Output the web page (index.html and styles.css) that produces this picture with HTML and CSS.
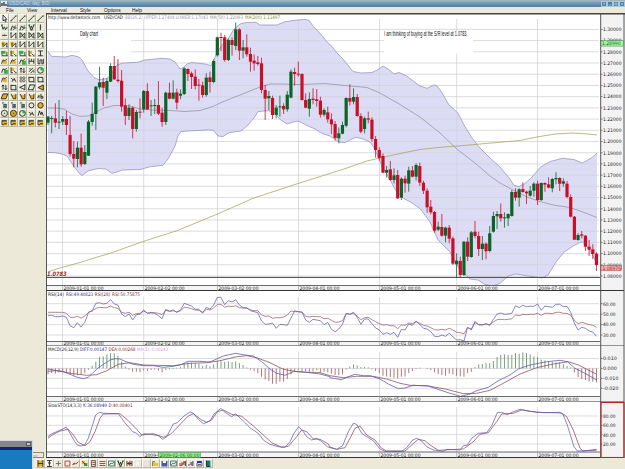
FILE: index.html
```
<!DOCTYPE html>
<html lang="en">
<head>
<meta charset="utf-8">
<title>USD/CAD, day, BID</title>
<link rel="stylesheet" href="styles.css">
</head>
<body>
<header class="titlebar">
  <svg class="app-icon" viewBox="0 0 6 6"><rect width="6" height="6" fill="#e8e8e0"/><path d="M1 5V2M3 5V1M5 5V3" stroke="#222" stroke-width="1.2"/></svg>
  <span class="title">USD/CAD, day, BID</span>
  <div class="window-buttons">
    <svg viewBox="0 0 6 6"><path d="M3 5V1M1.5 2.5L3 1L4.500 2.500"/></svg>
    <svg viewBox="0 0 6 6"><path d="M1 4.500H5"/></svg>
    <svg viewBox="0 0 6 6"><rect x="1.500" y="1.500" width="3" height="3"/></svg>
    <svg viewBox="0 0 6 6"><path d="M1 1L5 5M5 1L1 5"/></svg>
  </div>
</header>
<nav class="menu"><span>File</span><span>View</span><span>Interval</span><span>Style</span><span>Options</span><span>Help</span></nav>
<main class="workspace">
  <aside class="side">
    <div class="tools" id="tools"></div>
    <div class="side-tab">rpt:</div>
  </aside>
  <section class="charts">
    <svg class="chart price" id="price" viewBox="46 13 579 278"></svg>
    <svg class="chart rsi" id="rsi" viewBox="46 291 579 55"></svg>
    <svg class="chart macd" id="macd" viewBox="46 346 579 56"></svg>
    <svg class="chart sto" id="sto" viewBox="46 402 579 56"></svg>
  </section>
</main>
<footer class="bottombar" id="bottombar"></footer>
<div class="popup"><div class="popup-title"><span></span></div><div class="popup-edge"></div></div>
<script src="chart.js"></script>
</body>
</html>
```
FILE: styles.css
```
* { box-sizing: border-box; }
body {
  margin: 0;
  width: 625px;
  height: 469px;
  overflow: hidden;
  display: flex;
  flex-direction: column;
  background: #ece9d8;
  font-family: "Liberation Sans", sans-serif;
}
.titlebar {
  height: 7px;
  display: flex;
  align-items: center;
  background: linear-gradient(#a9b9c6, #7398b4 45%, #4a7ea8);
}
.app-icon { width: 6px; height: 6px; margin-left: 1px; }
.title { margin-left: 2px; font-size: 4.6px; line-height: 7px; color: #c6d9e8; white-space: nowrap; }
.window-buttons { margin-left: auto; display: flex; }
.window-buttons svg { width: 6px; height: 6px; background: #4a7fa6; border: 0.5px solid #a8c8dc; fill: none; stroke: #d4e4ee; stroke-width: 0.8; }
.menu {
  height: 6px;
  padding-left: 6px;
  display: grid;
  grid-template-columns: 21px 24px 29px 24px 28px 20px;
  font-size: 4.8px;
  line-height: 7px;
  color: #111;
}
.workspace { height: 445px; display: flex; }
.side { width: 46px; display: flex; flex-direction: column; justify-content: space-between; }
.tools {
  display: grid;
  grid-template-columns: repeat(5, 8.9px);
  grid-auto-rows: 8.68px;
  width: 45px;
  padding-top: 1px;
  background: #e3dfce;
}
.tool { width: 8.9px; height: 8.68px; fill: none; stroke: #222; stroke-width: 0.9; }
.side-tab { width: 12px; height: 6px; margin-left: 32px; border: 0.5px solid #8b887b; font-size: 4px; line-height: 5px; color: #a19e90; }
.charts { width: 579px; display: flex; flex-direction: column; background: #fff; }
.chart { display: block; width: 579px; }
.price { height: 278px; }
.rsi { height: 55px; }
.macd { height: 56px; }
.sto { height: 56px; }
.chart text { font-family: "DejaVu Sans", sans-serif; font-size: 4.8px; fill: #222; }
.chart .note { font-family: "Liberation Sans", sans-serif; font-size: 6.4px; fill: #111; }
.chart .level { font-family: "DejaVu Sans", sans-serif; font-size: 6px; font-weight: bold; font-style: italic; fill: #a51c1c; }
.grid { stroke: #cdcdd0; stroke-width: 0.7; fill: none; }
.line { fill: none; stroke-width: 0.75; stroke-linejoin: round; }
.bottombar { height: 11px; padding: 1px 0 0 36px; display: flex; }
.bottombar .tool { width: 8.87px; height: 9px; }
.popup { position: absolute; left: 0; top: 440px; width: 33px; height: 29px; background: #1a7abf; border-right: 1.5px solid #d8dadf; border-top: 1px solid #d8dadf; }
.popup-title { height: 6px; background: #85878a; display: flex; justify-content: flex-end; padding: 1px; }
.popup-title span { width: 5px; height: 4px; background: #c9cbd0; border: 0.5px solid #555; }
.popup-edge { height: 3px; background: #17207c; }
```
FILE: chart.js
```
const X0 = 48, STEP = 3.681;
const xAt = i => X0 + STEP * i;
const months = [[62.5, '2009-01-01 00:00'], [143.7, '2009-02-02 00:00'], [217.5, '2009-03-02 00:00'], [298.5, '2009-04-01 00:00'], [379.5, '2009-05-01 00:00'], [456.7, '2009-06-01 00:00'], [537.5, '2009-07-01 00:00']];

const text = (x, y, s, w, fill, cls) =>
  `<text x="${x}" y="${y}"${w ? ` textLength="${w}" lengthAdjust="spacingAndGlyphs"` : ''}${fill ? ` style="fill:${fill}"` : ''}${cls ? ` class="${cls}"` : ''}>${s}</text>`;
const hline = (y, c = '#333', w = 1, x2 = 600) => `<path d="M46 ${y}H${x2}" stroke="${c}" stroke-width="${w}"/>`;
const poly = (pts, c) => `<polyline class="line" stroke="${c}" points="${pts}"/>`;
const rect = (x, y, w, h, f, s) => `<rect x="${x}" y="${y}" width="${w}" height="${h}" fill="${f}"${s ? ` stroke="${s}" stroke-width=".5"` : ''}/>`;
// Converts triple-resolution points to drawing units
const scaled = (s, ox, oy) => s.split(' ').map(p => { const [a, b] = p.split(','); return (ox + a / 3).toFixed(1) + ',' + (oy + b / 3).toFixed(1); }).join(' ');

function frame(top, bottom, dateTop, gridTop, levels) {
  let s = rect(46, top, 555, bottom - top, '#fff') + rect(601, top, 24, bottom - top, '#f3f3f3');
  levels.forEach(([y]) => s += `<path class="grid" d="M47 ${y}H599"/>`);
  months.forEach(([x]) => s += `<path class="grid" d="M${x} ${gridTop}V${dateTop}"/>`);
  return s;
}
function finish(top, bottom, dateTop, levels, w) {
  let s = rect(47, dateTop, 553, bottom - dateTop, '#f4f4f4') + hline(dateTop, '#444', 0.8) + hline(bottom - 0.5, '#333', 1, 624);
  months.forEach(([x, t]) => s += `<path d="M${x} ${dateTop}V${bottom}" stroke="#888" stroke-width=".5"/>` + text(x + 1, bottom - 1.3, t, 40));
  s += `<path d="M46.5 ${top}V${bottom}M600.7 ${top}V${bottom}M624 ${top}V${bottom}" stroke="#444" stroke-width=".9"/>`;
  levels.forEach(([y, t]) => s += `<path d="M601 ${y}h1.500" stroke="#444" stroke-width=".7"/>` + text(603, y + 1.8, t, w));
  return s;
}

/* ---- price ---- */
const candles = [
[10, 'g318,320,338,345 g318,324,327,370 r280,325,338,352 g270,335,338,357 g318,327,335,345 r303,327,345,375 r318,375,432,440 r393,432,446,472 g395,413,447,472 r371,413,463,470 g405,426,462,465 g330,335,437,438 g278,312,336,347 g228,230,312,360 g170,217,232,238 r203,216,233,288 g205,213,248,267 g160,168,215,216 r138,168,208,210 r147,209,213,218 r180,212,290,305 r265,286,318,345 g283,293,318,330 r290,293,357,385 g300,306,357,365 r265,305,308,325 g240,243,298,308 r220,243,298,300 g270,286,289,318 g267,285,288,312 r213,285,311,315 r293,308,336,350 g245,248,336,345 r218,248,266,268 g211,248,266,268 r236,247,278,298 g238,251,257,268 g172,175,252,255 r175,177,192,213 r185,190,201,237 r178,200,228,238 r207,224,227,272 r215,226,255,263 g190,203,255,260 r185,202,216,248 g148,153,216,220 g80,82,136,140 r68,81,84,123 r75,82,150,155 g85,90,150,153 r82,90,105,137 g37,58,108,120 r55,58,122,150 g90,112,122,145 r73,112,133,140 r113,132,155,185 r133,152,160,182 r138,157,162,167 r143,160,240,250 r225,240,266,330 g243,258,265,300 r257,264,315,327 g285,293,315,325 g257,289,292,320 r280,288,298,312 g243,254,298,305 g178,185,263,265 r173,186,192,227 r155,191,193,200 r190,192,270,272 r250,270,293,295 g247,267,296,320 r235,266,270,283 r237,268,273,290 r260,272,314,323 g295,300,314,320 r290,307,328,338 r310,328,343,372 r333,342,384,392 g353,370,385,400 g335,345,371,373 g262,264,347,352 r223,264,275,287 g235,261,275,283 r252,261,318,320 r310,318,365,370 g320,325,357,370 r305,325,329,340 r322,329,387,395'],
[60, 'r228,237,270,293 r262,270,294,302 r280,288,338,340 g318,330,338,353 r303,328,360,362 g325,346,360,370 r330,345,415,417 g352,356,413,420 r347,356,370,398 g320,331,371,395 r318,331,350,352 g310,315,350,362 r308,318,368,378'],
[150, 'r92,98,122,132 r115,122,172,188 r150,170,187,193 r183,186,242,248 g215,230,239,243 r192,231,257,260 g230,233,257,277 r225,233,266,280 r260,265,341,345 g310,332,343,384 r320,333,375,382 g273,275,375,378 r262,275,320,333 g243,247,321,323 r213,245,258,265 r245,258,297,318 g258,281,297,330 r277,281,304,328 g228,250,303,307 g185,198,245,248 g183,192,199,237 r160,192,205,215 g187,202,205,233 g190,192,205,228 g120,126,198,200 r115,126,143,152 g115,118,143,170 r97,117,126,128 r122,125,130,162 g108,122,137,140 g97,101,122,140 r92,101,150,165 g98,99,150,153 r97,99,104,125 r82,103,113,115 g84,87,115,127 g67,84,88,103 r82,84,101,123 g85,94,101,110 r93,101,141,145 r133,141,200,203 r198,200,269,270 g250,255,270,272 r243,253,257,265 r255,257,290,303 r270,290,299,318 r283,298,312,327 r307,311,345,363']];
const upper = '48,51.5 51.5,56.3 66,57 72,55.3 79,57 82,60 88,71 94,77.5 99,79.8 107,78.5 112,73 117,65 123,63 138,62.3 145,60 162,58.3 170,59 175,62 180,69 184,67 187,64 192,62.5 205,64 211,65.5 214,60 217,52 223,44 228,39 234,29 240,24 246,22.5 256,22.3 260,25 277,25 284,22 292,20.7 304,19.3 309,20.3 313,26 322,35.5 327,42 332,46.5 337,53 343,59 353,71.5 361,73 372,72.5 378,69.5 383,66 388,69 394,74 399,72.5 406,75.5 414,81.5 420,86 427,88.3 434,85 437,86 441,91 449,105 458,113 464,125 472,138 480,148 490,158 500,167 510,179 514,185.5 519,186.5 525,183.5 532,177 540,167.5 550,161.5 558,159.5 562,158.3 574,159.5 582,163 586,161 592,157.5 597,153';
const lower = '48,152.5 54,152.5 61,153.8 67,156 73,165 79,173 82,175.5 88,171 98,168.5 106,169 112,173.3 117,172 122,170 140,169.5 150,166.8 163,165.3 168,159 175,146 178,136 181,131.5 192,130.8 206,130 213,130 218,136 223,136.6 229,132.5 241,131 248,125 254,118 258,111.5 268,110.8 274,112 280,119.5 287,124 295,121.5 299,121.3 306,125 315,129 322,133.5 330,136 339,142 345,142.7 350,140 356,137.3 363,139 370,142 373,146 377,154 382,166 389,178 396,191 403,198 412,203 420,208.500 430,222 438,240 450,252 460,270 470,279 478,280 484,284 492,286 500,283.5 508,276 516,274 528,276 542,278 548,275 556,262 564,252 574,245.5 582,241.5 590,250 597,264';
const ma50 = '48,108 56,108 64,109 72,114 80,116.3 88,116 96,112 104,108 114,105.5 121,105.5 130,106 140,109 152,110 170,110.5 185,111.5 200,110.5 213,106.5 220,103 240,95 260,87 270,84 283,84 300,84.5 325,83.5 345,85.5 367,87.5 380,93 400,104.5 420,117 440,133 458,150 475,163 490,176 500,183 515,191 527,197 540,201.5 553,205 570,207.5 580,211 588,214 597,217.5';
const ma200 = '48,272 58,268.500 80,262.500 94,258 110,253.3 143,241.5 177,230.7 217.5,214 253,198.3 298,183.5 345,168.7 367,161 380,158 400,153.500 420,149.5 440,147.300 458,146 480,144 505,141.800 520,140.5 537,137 555,134 572,133 585,133.7 597,135';

const priceLevels = [];
for (let k = 0; k < 23; k++) priceLevels.push([29.4 + k * 11.21, (1.3 - k * 0.01).toFixed(5)]);
let out = frame(13, 291, 285.5, 19, priceLevels);
// Note backgrounds hide the grid behind them
out += rect(80, 31, 51, 22.5, '#fff') + rect(384, 31, 89, 22.5, '#fff');
out += `<polygon fill="#dddcf5" points="${upper} ${lower.split(' ').reverse().join(' ')}"/>`;
out += `<clipPath id="band"><polygon points="${upper} ${lower.split(' ').reverse().join(' ')}"/></clipPath><g opacity=".75" clip-path="url(#band)">`;
priceLevels.forEach(([y]) => out += `<path class="grid" d="M47 ${y}H599"/>`);
months.forEach(([x]) => out += `<path class="grid" d="M${x} 19V285"/>`);
out += '</g>' + poly(upper, '#9493c4') + poly(lower, '#9493c4') + poly(ma50, '#9292a4') + poly(ma200, '#a3a35a');
let idx = 0;
candles.forEach(([oy, list]) => list.split(' ').forEach(c => {
  const color = c[0] === 'g' ? '#0b6427' : '#c80f28';
  const [h, t, b, l] = c.slice(1).split(',').map(v => oy + v / 3);
  const x = xAt(idx++);
  out += `<path d="M${x} ${h}V${l}" stroke="${color}" stroke-width=".8"/>` + rect((x - 1.6).toFixed(2), t.toFixed(2), 3.2, Math.max(1, b - t).toFixed(2), color);
}));
out += hline(277.4, '#444', 1);
out += text(80, 36.3, 'Daily chart', 18, '', 'note') + text(384, 36.3, 'I am thinking of buying at the S/R level at 1.0783.', 83.5, '', 'note');
out += text(47, 276, '1.0783', 19.5, '', 'level');
out += text(48, 18.6, 'http://www.deltastock.com', 52) + text(104, 18.6, 'USD/CAD', 19) + text(125, 18.6, 'BB(26,2) UPPER:1.27404 LOWER:1.17043', 83, '#9a99bb') + text(210, 18.6, 'MA(50) 1.22093', 33, '#8f8f9c') + text(245, 18.6, 'MA(200) 1.11497', 35, '#8a8a30');
out += finish(13, 291, 285.5, priceLevels, 18.5) + hline(13.8, '#444', 1.4, 625);
out += rect(601, 40.7, 22.5, 5.4, '#a6f3a2', '#3a7a3a') + text(602, 45.1, '1.28990', 18.5, '#245c24');
out += rect(601, 265.3, 20.5, 5.2, '#f4b6b6', '#a33') + text(602.5, 269.7, '1.08976', 18.5, '#822');
document.getElementById('price').innerHTML = out;

/* ---- RSI ---- */
const series = parts => { let i = 0, p = []; parts.forEach(([oy, s]) => s.split(' ').forEach(v => p.push(xAt(i++).toFixed(1) + ',' + (oy + v / 3).toFixed(1)))); return p.join(' '); };
const rsiFast = series([
[250, '196 196 200 200 198 202 227 233 218 231 217 187 182 160 158 162 160 149 162 165 192 200 192 210 194 193 180 190 188 190 197 206 178 184 180 187 180 160 164 168 178 178 190 172 177 165 142 142 164 152 156 149 165'],
[160, '443 443 452 455 458 483 493 492 489 505 493 494 496 475 452 455 456 480 487 478 480 482 494 487'],
[280, '148 155 147 133 100 103 97 112 133 117 117 131 144 150 163 158 163 157 172 148 150 132 136 124 133 145 147 155 169 170 165 169 160 170 180 179 183 142 150 124 135 135 131 136 118 102 99 103 102 100 77 83 76 80 79 79 72 91 78 80 82 73 73 80 79 97 130 150 142 145 153 156 169']]);
const rsiSlow = series([
[250, '187 187 187 187 187 190 202 202 199 204 198 187 183 175 172 173 173 168 173 175 187 190 187 196 191 190 183 189 188 188 190 194 181 184 182 186 182 172 173 176 180 181 187 178 180 174 163 163 172 168 170 167 173'],
[160, '444 445 450 452 452 465 469 468 475 473 473 471 465 453 455 455 457 469 471 469 470 470 476 475'],
[280, '121 127 126 122 101 103 100 108 119 113 112 119 125 131 135 134 137 137 146 135 136 129 131 125 130 136 138 143 149 150 148 150 145 150 157 158 161 143 147 128 133 134 132 134 126 119 118 119 118 116 105 107 103 104 103 103 100 106 100 100 101 97 97 100 100 106 121 131 127 130 134 136 142']]);
const rsiLevels = [[303.7, '60.00'], [314.2, '50.00'], [324.6, '40.00'], [335, '30.00']];
document.getElementById('rsi').innerHTML = frame(291, 346.5, 341.5, 297, rsiLevels) + poly(rsiSlow, '#96606a') + poly(rsiFast, '#5f5fae')
  + text(48, 295.9, 'RSI(14)', 16) + text(66, 295.9, 'RSI:49.40823', 27, '#2c2c8c') + text(94.5, 295.9, 'RSI(28)', 16, '#7c2c2c') + text(112, 295.9, 'RSI:50.75875', 28, '#7c2c2c') + finish(291, 346.5, 341.5, rsiLevels, 12.5);

/* ---- MACD ---- */
const diff = scaled('24,94 46,92 68,94 90,103 112,112 130,116 145,112 160,97 175,83 195,70 210,60 225,56 240,57 255,64 280,73 311,77 340,77 370,82 400,79 420,75 445,64 480,64 510,66 530,57 550,48 587,40 610,44 640,48 665,65 690,87 710,100 735,106 760,95 776,94 800,97 840,102 870,110', 40, 340) + ' ' + scaled('0,293 35,299 50,292 75,283 100,287 120,287 150,297 175,312 205,326 225,324 250,316 295,318 330,330 360,340 392,349 420,342 440,332 475,322 505,302 540,285 565,267 600,255 650,245 690,241 712,245 735,265 765,280 800,300', 330, 280);
const dea = scaled('24,87 60,94 100,101 140,106 170,104 200,92 235,73 270,68 311,75 400,77 450,70 500,68 540,62 590,50 620,47 650,53 690,68 730,88 776,96 840,98', 40, 340) + ' ' + scaled('0,287 40,293 80,289 130,289 170,297 210,310 240,316 290,317 350,328 400,341 440,340 480,331 520,310 570,282 620,263 670,252 715,245 745,255 775,270 800,283', 330, 280);
const hist = [-18,-14,-16,-12,-10,-14,-18,-20,-20,-18,-14,-4,8,20,35,36,42,46,45,38,20,5,-4,-10,-10,-11,-6,-8,-5,-4,-7,-12,-5,-3,-2,2,4,14,18,17,15,14,7,10,6,12,22,24,20,21,19,21,16,10,3,-4,-8,-14,-25,-33,-38,-46,-46,-40,-40,-32,-18,-8,-4,-8,-8,-10,-9,-6,-12,-10,-12,-16,-20,-20,-18,-4,6,12,9,4,4,3,-3,-8,-14,-22,-24,-26,-28,-30,-25,-24,-14,-8,-2,2,0,-2,-5,-12,-17,-20,-22,-16,-18,-22,-24,-25,-14,-10,4,12,13,16,16,22,34,40,42,40,40,46,44,48,46,42,36,34,26,24,22,20,18,18,13,8,3,-12,-26,-32,-35,-40,-40,-42];
const macdLevels = [[358.5, '0.010'], [368.4, '0.000'], [378.4, '-0.010'], [388.3, '-0.020']];
let m = frame(346, 402.5, 396.5, 352, macdLevels);
hist.forEach((v, i) => m += `<path d="M${xAt(i)} 368.400v${-v / 3}" stroke="${v > 0 ? '#66976a' : '#a8686e'}" stroke-width=".9"/>`);
m += poly(dea, '#854a55') + poly(diff, '#5555ad') + text(48, 351.2, 'MACD(26,12,9)', 30.5) + text(80, 351.2, 'DIFF:0.00147', 27, '#2c2c8c') + text(108.5, 351.2, 'DEA:0.00268', 27, '#7c2c2c') + text(137, 351.2, 'MACD:-0.00243', 31, '#d59bd5');
document.getElementById('macd').innerHTML = m + finish(346, 402.5, 396.5, macdLevels, 0);

/* ---- slow stochastic ---- */
const k = scaled('24,290 35,281 46,277 57,272 68,267 79,261 90,280 101,300 112,315 123,318 134,315 145,295 156,260 167,225 178,217 190,220 235,221 245,235 256,250 267,262 278,275 290,280 300,290 311,281 333,283 355,287 368,298 380,290 400,252 412,248 432,228 450,216 460,220 475,238 490,251 510,243 522,222 543,205 552,215 575,230 587,221 600,234 615,248 632,265 655,280 670,300 690,313 715,320 735,322 750,305 762,280 776,260 790,275 800,290 815,300 830,295 845,305 862,320', 40, 340) + ' ' + scaled('0,503 20,508 38,497 55,455 70,430 80,433 95,460 110,470 130,482 150,507 165,514 215,514 230,503 248,480 260,475 275,483 290,500 310,510 340,514 350,508 390,510 400,497 412,495 425,475 445,460 470,458 485,437 502,398 515,397 532,404 550,395 570,388 600,394 640,398 690,397 700,405 712,435 732,500 742,513 800,511', 330, 280);
const d = scaled('24,295 40,283 60,273 85,268 100,285 115,307 135,317 150,305 165,275 180,235 190,222 240,221 265,242 290,268 305,285 340,281 370,292 390,284 410,264 430,243 445,228 460,221 485,240 500,247 515,240 532,215 550,210 575,223 605,229 640,258 670,285 695,308 725,322 745,319 770,290 785,270 800,275 820,297 840,298 865,312', 40, 340) + ' ' + scaled('0,501 20,508 45,503 60,475 75,445 90,438 110,465 135,480 155,505 170,513 225,513 245,495 265,478 285,482 300,495 325,511 400,507 430,485 450,463 475,458 500,425 515,402 550,400 575,390 620,397 695,399 710,410 730,450 750,505 760,513 800,508', 330, 280);
const stoLevels = [[416, '80.00'], [425.3, '60.00'], [434.7, '40.00'], [444, '20.00']];
document.getElementById('sto').innerHTML = frame(402, 458, 452, 407, stoLevels) + poly(d, '#854a55') + poly(k, '#5f5fae')
  + text(48, 407, 'SlowSTO(14,3,3)', 33.5) + text(83, 407, 'K:36.08949', 24, '#2c2c8c') + text(108.5, 407, 'D:40.08401', 24, '#7c2c2c')
  + finish(402, 458, 452, stoLevels, 12.5) + rect(158.5, 452.3, 42, 5.2, '#9af096', '#3a8a3a') + text(159.5, 456.7, '2009-02-06 00:00', 40, '#245c24')
  + '<rect x="601" y="402.500" width="23" height="55" fill="none" stroke="#b22a2a" stroke-width="1.1"/>';

/* ---- tool buttons ---- */
const Y = '#e8ae1c', G = '#22b83a', N = '#1d2f9a';
const p = (dd, c) => `<path d="${dd}"${c ? ` stroke="${c}"` : ''}/>`;
const f = (dd, c) => `<path d="${dd}" fill="${c}" stroke="none"/>`;
const dots = (...a) => a.map(([x, y]) => `<rect x="${x - .6}" y="${y - .6}" width="1.300" height="1.300" fill="#064" stroke="none"/>`).join('');
const I = {
  ptr: f('M3 1V7L4.500 6L5.500 8L6.300 7.500L5.300 5.500H7Z', '#fff') + p('M3 1V7L4.500 6L5.500 8L6.300 7.500L5.300 5.500H7Z'),
  ln: p('M2 7L7 2') + dots([2, 7], [7, 2]),
  zig: p('M1.500 2L3 6L4.500 4L5.500 7L7 5') + dots([2, 2], [3, 6], [7, 5]),
  arc: p('M2 7L3.500 3L5 5L7 2.500M4 7L7 5') + dots([2, 7], [7, 5]),
  w: p('M2 2L3.500 6L4.500 3L5.500 6L7 2M3 7H6') + dots([2, 2], [7, 2], [4.5, 7]),
  v: p('M4.500 1.500V7.500') + dots([4.5, 4.5]),
  h: p('M2 4.500H7') + dots([4.5, 4.5]),
  n: p('M2 7V2M2 7L7 2V7') + dots([2, 2], [7, 7]),
  x: p('M2 2V7L7 2V7M3 2L6 7') + dots([2, 2], [7, 7]),
  yx: f('M1.500 2H5V5H1.500Z', Y) + p('M3 3V7M3 7L7 3V7') + dots([7, 7]),
  gb: f('M1 2H5.500V5H1Z', G) + p('M2 7H8M2 5V7M7 3V7', '#333'),
  yb: f('M2 2H5V5H2Z', Y) + p('M2 1.500V7H4M5 5L7 7') + dots([7, 7]),
  i: p('M2 2H7M4.500 2V7M2 7H7'),
  ya: f('M3 4H7V7H3Z', Y) + p('M1.500 7L3 3L5 4L7 2'),
  ga: f('M4 4H8V8H4Z', G) + p('M1.500 7L3 3L5 4L7 2'),
  H: p('M2 1.500V7.500M2 4.500H7M7 2V7M4.500 2V4'),
  U: p('M2 1.500V7H4V3H6V7H7.500V2'),
  up: p('M3 7V2M1.800 3.500L3 2L4.200 3.500M6 2V7M4.800 5.500L6 7L7.200 5.500'),
  grid: '<g stroke-width=".6"><circle cx="3" cy="3" r="1.200"/><circle cx="6" cy="3" r="1.200"/><circle cx="3" cy="6" r="1.200"/><circle cx="6" cy="6" r="1.200"/></g>',
  sq: p('M2 2.500H7V7H2Z') + dots([2, 2.5], [7, 7]),
  ch: p('M2 6L6 2M3.500 7.500L7.500 3.500') + dots([3, 3], [7, 6]),
  tri: p('M7 2V7L2 4.500Z') + dots([7, 2], [2, 4.5]),
  ytri: f('M7.500 2V7.500L2 4.700Z', Y) + p('M7.500 2V7.500L2 4.700Z'),
  par: p('M3 2H8L6 7H1Z') + dots([3, 2], [6, 7]),
  ypar: f('M3 2H8L6 7H1Z', Y) + p('M3 2H8L6 7H1Z'),
  ybox: f('M3 3H7V7H3Z', Y) + p('M2 2L4 6M7 2V7H4'),
  ab: p('M1.500 6L3 3.500V6.500M5 2V6.500H7V4.500H5'),
  doc: f('M3 3H7V7.500H3Z', '#78909c') + p('M2 2H4M4 4H7M4 6H7', '#234'),
  hex: '<circle cx="4.500" cy="4.500" r="2.600"/>',
  yhex: `<circle cx="4.500" cy="4.500" r="2.800" fill="${Y}"/>`,
  tgt: '<circle cx="4.500" cy="4.500" r="3.200"/>' + dots([4.5, 4.5]),
  ytgt: `<circle cx="4.500" cy="4.500" r="3.200" fill="${Y}"/>` + dots([4.5, 4.5]),
  gp: '<circle cx="4.500" cy="4.500" r="3"/>' + f('M4.500 4.500V1A3.500 3.500 0 0 1 8 5Z', G),
  man: p('M2 3L4 5L3 7M5 3L7 7M4 5H6'),
  A: p('M2 7L3.500 2L5 6L6 3L7.500 7'),
  trash: f('M2 2H7V4H2Z', '#555') + f('M3 4H7.500V7.500H3Z', Y) + p('M2 2.500V7H4M4 6H7'),
  film: f('M2 1.500H7V7.500H2Z', Y) + p('M2 1V8M7 1V8M2 4.500H7'),
  cur: p('M2 1.500H7M2 7.500H7M4.500 1.500V7.500M3 4H6'),
  plus: p('M4.500 2V7M2 4.500H7', '#666'),
  rs: p('M2 2H7V7H2Z', '#a44'),
  rz: p('M1.500 6L3.500 4L5 5L7.500 2.500', '#922') + dots([3, 5]),
  mix: f('M2 2H5V5H2Z', Y) + f('M4 4H7.500V7H4Z', G) + p('M2 2L7 7', '#a22'),
  page: p('M2.500 1.500H6.500V7.500H2.500ZM3.500 3.500H6M3.500 5.500H6', '#644'),
  eq: p('M1.500 2.500H7.500M1.500 4.500H7.500M1.500 6.500H7.500', '#844'),
  img: p('M1.500 2H7.500V7H1.500ZM2 6L4 4L5 5L7 3', '#377'),
  bars: p('M2 2V7M4 3V6M5 2V7M7 2V7M2 4.500H7', '#522'),
  blank: p('M2 2H7V7H2Z', '#ddd'),
  fold: f('M1.500 3H4L5 4H7.500V7H1.500Z', '#e6c247') + p('M1.500 7V2.500H4', '#775'),
  save: f('M1.500 2H7.500V7.500H1.500Z', '#4458b5') + f('M3 2H6V4H3Z', '#fff'),
  rc: p('M2 4V7M4 3V7M6 2V6M2 7L7 3', '#a22') + p('M7.500 2V7', '#222'),
  bc: p('M2 5V7M4 3V6M6 2V7', N) + p('M5 3V7', '#b22'),
  win: f('M2 2H7V4H2Z', N) + p('M2 4V7H7V4M3 5.500H6', '#555'),
  door: f('M2.500 1.500H6.500V7.500H2.500Z', '#087f83') + p('M2.500 1.500V7.500H6.500')
};
const button = (n, on) => `<svg class="tool" viewBox="0 0 9 9"><rect x=".3" y=".3" width="8.400" height="8.400" fill="${on ? '#f7f5ee' : '#ece9d8'}" stroke="none"/><path d="M.5 8.700V.4H8.500" stroke="#fff" stroke-width=".7"/><path d="M.3 8.700H8.700V.3" stroke="#8f8b7c" stroke-width=".6"/>${I[n]}</svg>`;
const side = 'ptr ln ln ln ln zig arc arc w v h n x x x yx yx n n n gb yb gb yb i ya ya ga H U ga yb up ch gp ya man grid sq sq up sq tri par ytri ypar ybox ybox ybox ab doc doc doc hex yhex tgt ytgt gp man A trash trash trash trash trash';
document.getElementById('tools').innerHTML = side.split(' ').map((n, i) => button(n, i === 0)).join('');
const bottom = 'film cur plus rs rz mix page eq img w bars blank blank fold save img rc bc win door';
document.getElementById('bottombar').innerHTML = bottom.split(' ').map((n, i) => button(n, i === 1 || i === 11)).join('');
```
